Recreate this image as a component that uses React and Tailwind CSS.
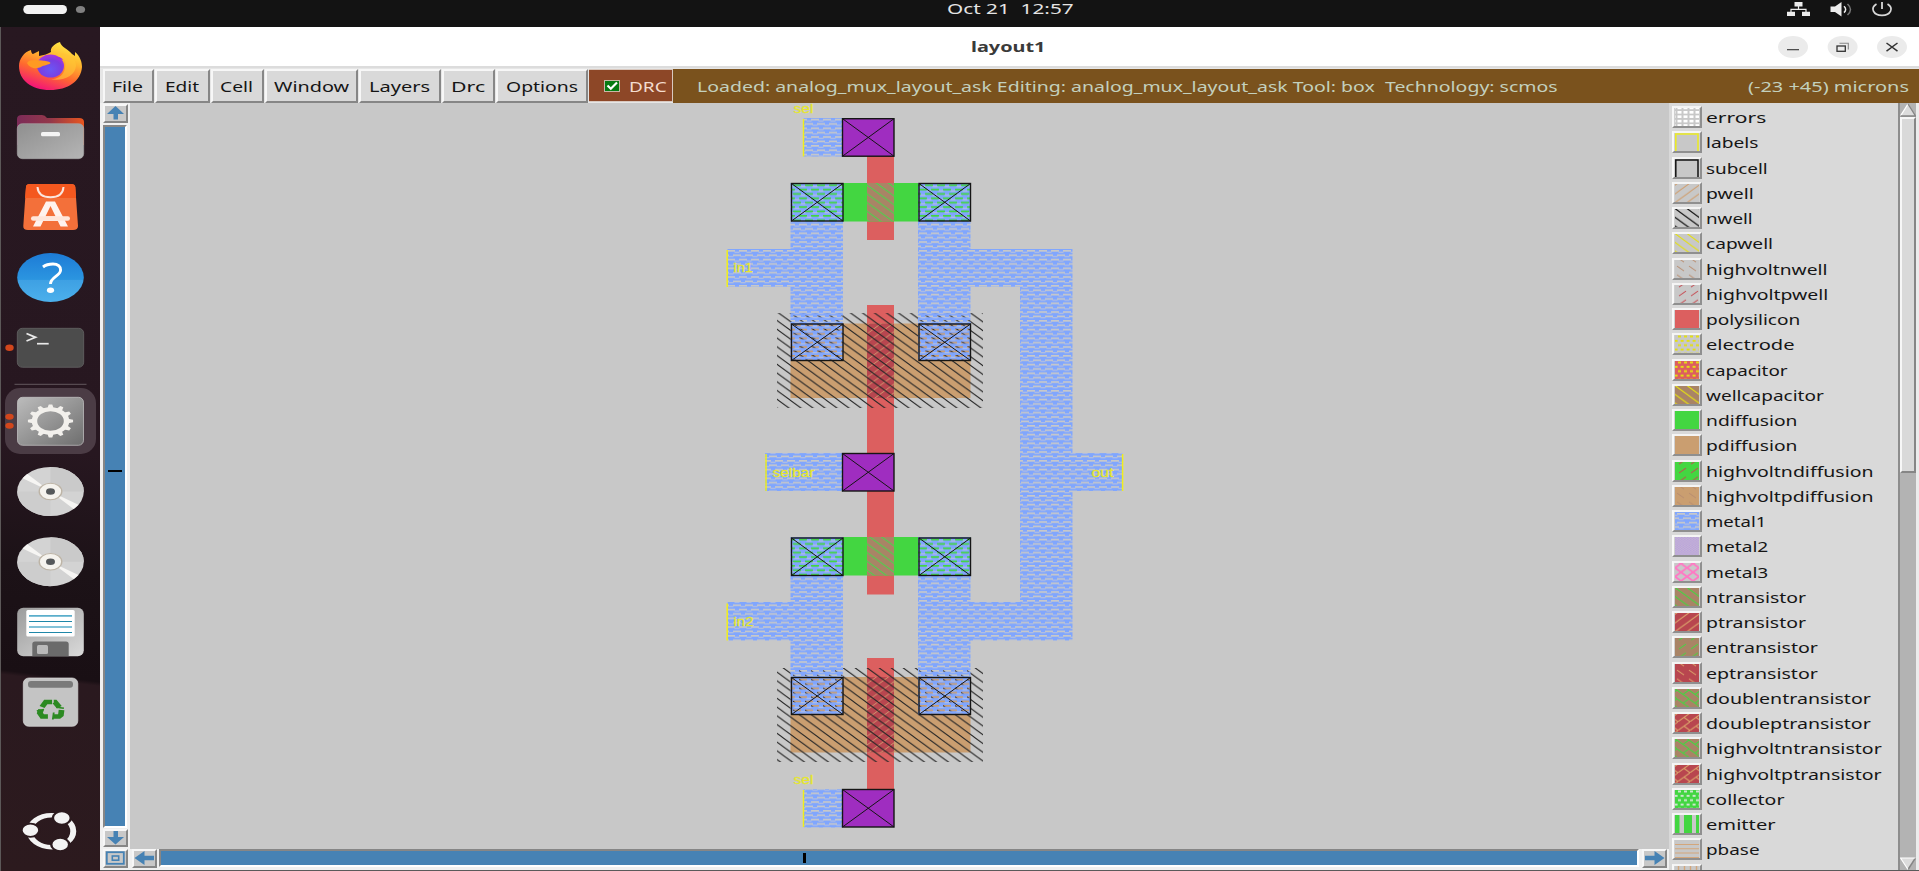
import React, { useLayoutEffect, useRef, useState } from "react";

/* Text stretched horizontally so that it fills a given width. */
function Fit({ w, className = "", children }) {
  const ref = useRef(null);
  const [k, setK] = useState(1);
  useLayoutEffect(() => {
    const n = ref.current.offsetWidth;
    if (n) setK(w / n);
  }, [w]);
  return (
    <span className="block shrink-0 whitespace-pre" style={{ width: w }}>
      <span ref={ref} className={`inline-block origin-left whitespace-pre ${className}`} style={{ transform: `scaleX(${k})` }}>
        {children}
      </span>
    </span>
  );
}

/* ---------- stipple patterns ---------- */
const TW = 12;
const TH = 8.75;

function Hatch({ id, color, kind, w = 1, x = 0, y = 0 }) {
  const paths = {
    back: `M-12 -8.75L24 17.5M-12 0L12 17.5M0 -8.75L24 8.75`,
    fwd: `M-12 17.5L24 -8.75M-12 8.75L12 -8.75M0 17.5L24 0`,
    backDash: `M2 2L9 7`,
    fwdDash: `M2 7L9 2`,
    brickBack: `M-12 -8.75L24 17.5M6 4.4L12 0`,
    brickFwd: `M-12 17.5L24 -8.75M6 4.4L12 8.75`,
  };
  return (
    <pattern id={id} width={TW} height={TH} x={x} y={y} patternUnits="userSpaceOnUse">
      <path d={paths[kind]} stroke={color} strokeWidth={w} fill="none" />
    </pattern>
  );
}

function Metal({ id, x = 0, y = 0 }) {
  return (
    <pattern id={id} width="12" height="8.75" x={x} y={y} patternUnits="userSpaceOnUse">
      <path
        fillRule="evenodd"
        fill="#80a6fe"
        d="M0 0H12V8.75H0ZM1 1H9V2.6H1ZM0 5.4H3V7H0ZM7 5.4H12V7H7Z"
      />
      <path d="M8.5 3.1H12M0 3.1H1.5M2.5 7.5H7.5" stroke="#c0c6da" strokeWidth="1" />
    </pattern>
  );
}

function Defs() {
  return (
    <defs>
      <Metal id="metal" x={6} y={4} />
      <Metal id="metalS" x={1} y={0} />
      <Hatch id="nwell" kind="back" color="#262626" w={1.05} x={778} y={312.5} />
      <Hatch id="nwell2" kind="back" color="#262626" w={1.05} x={782} y={667} />
      <Hatch id="ntr" kind="back" color="#4fd04c" w={1} x={867} y={185} />
      <Hatch id="ptr" kind="fwd" color="#d0a070" w={0.9} x={867} y={325} />
      <Hatch id="sPwell" kind="fwd" color="#cf9f70" y={-1} x={3} />
      <Hatch id="sNwell" kind="back" color="#111" w={1.2} y={1} x={2} />
      <Hatch id="sCap" kind="back" color="#e3e012" w={1.1} y={1} x={2} />
      <Hatch id="sHvn" kind="backDash" color="#b98d70" y={4} />
      <Hatch id="sHvp" kind="fwdDash" color="#c6484f" y={4} x={2} />
      <Hatch id="sGreen" kind="back" color="#43d641" y={1} x={2} />
      <Hatch id="sTan" kind="fwd" color="#dba36a" y={-1} x={3} />
      <Hatch id="sGreenD" kind="fwdDash" color="#43d641" y={4} x={2} />
      <Hatch id="sTanD" kind="backDash" color="#dba36a" y={4} />
      <Hatch id="sGreenB" kind="brickBack" color="#43d641" y={1} x={2} />
      <Hatch id="sTanB" kind="brickFwd" color="#dba36a" y={-1} x={3} />
      <pattern id="sDots" width="6" height="8.75" x="0" y="0" patternUnits="userSpaceOnUse">
        <path fill="#e3e012" d="M3 0.4H6V2.4H3ZM0 4.8H2.6V6.8H0ZM5.6 4.8H6V6.8H5.6Z" />
      </pattern>
      <pattern id="sColl" width="6" height="8.75" x="0" y="0" patternUnits="userSpaceOnUse">
        <path fill="#cfe6cf" d="M3 0.4H6V2.4H3ZM0 4.8H2.6V6.8H0ZM5.6 4.8H6V6.8H5.6Z" />
      </pattern>
      <pattern id="sErr" width="6" height="4.4" x="2.5" y="3" patternUnits="userSpaceOnUse">
        <rect width="4" height="2.6" fill="#fff" />
      </pattern>
      <pattern id="sM2" width="3" height="2.2" patternUnits="userSpaceOnUse">
        <path fill="#b9a2dc" d="M0 0H1.5V1.1H0ZM1.5 1.1H3V2.2H1.5Z" />
      </pattern>
      <pattern id="sM3" width="12" height="8.75" y="0.5" x="6" patternUnits="userSpaceOnUse">
        <path d="M0 0L12 8.75M0 8.75L12 0" stroke="#ff78c4" strokeWidth="1.8" />
      </pattern>
    </defs>
  );
}

/* ---------- layer palette ---------- */
const G = "#c8c8c8";
const LAYERS = [
  ["errors", 60, G, "url(#sErr)"],
  ["labels", 52, G, null, "#ecec20"],
  ["subcell", 62, G, null, "#111111"],
  ["pwell", 47, G, "url(#sPwell)"],
  ["nwell", 47, G, "url(#sNwell)"],
  ["capwell", 67, G, "url(#sCap)"],
  ["highvoltnwell", 122, G, "url(#sHvn)"],
  ["highvoltpwell", 122, G, "url(#sHvp)"],
  ["polysilicon", 94, "#dc5f5f"],
  ["electrode", 89, G, "url(#sDots)"],
  ["capacitor", 82, "#dc5f5f", "url(#sDots)"],
  ["wellcapacitor", 118, "#a98466", "url(#sCap)"],
  ["ndiffusion", 92, "#43d641"],
  ["pdiffusion", 92, "#ca9e70"],
  ["highvoltndiffusion", 167, "#43d641", "url(#sHvp)"],
  ["highvoltpdiffusion", 167, "#ca9e70", "url(#sHvn)"],
  ["metal1", 61, G, "url(#metalS)"],
  ["metal2", 63, "#c4b4d4", "url(#sM2)"],
  ["metal3", 63, G, "url(#sM3)"],
  ["ntransistor", 100, "#a98466", "url(#sGreen)"],
  ["ptransistor", 100, "#b8464f", "url(#sTan)"],
  ["entransistor", 112, "#a98466", "url(#sGreenD)"],
  ["eptransistor", 112, "#b8464f", "url(#sTanD)"],
  ["doublentransistor", 165, "#a98466", "url(#sGreenB)"],
  ["doubleptransistor", 165, "#b8464f", "url(#sTanB)"],
  ["highvoltntransistor", 176, "#a98466", "url(#sGreenB)"],
  ["highvoltptransistor", 176, "#b8464f", "url(#sTanB)"],
  ["collector", 78, "#43d641", "url(#sColl)"],
  ["emitter", 69, G, null, null, "v"],
  ["pbase", 54, G, null, null, "h"],
  ["", 10, G, null, null, "t"],
];

function LayerRow({ layer }) {
  const [name, w, base, pat, frame, extra] = layer;
  return (
    <div className="flex h-[25.26px] shrink-0 items-center">
      <div className="mr-[4px] h-[22px] w-[30px] border-2 border-t-[#f4f4f4] border-l-[#f8f8f8] border-r-[#8f8f8f] border-b-[#8f8f8f] bg-[#d0d0d0] pl-px">
        <svg width="24" height="18" viewBox="0 0 24 18" className="block">
          <rect width="24" height="18" fill={base} />
          {pat && <rect width="24" height="18" fill={pat} />}
          {frame && <path d="M0.8 18V1H23V18" fill="none" stroke={frame} strokeWidth="1.5" />}
          {extra === "v" && <path d="M0 0H4.5V18H0ZM9 0H17V18H9ZM21 0H24V18H21Z" fill="#43d641" />}
          {extra === "h" && <path d="M0 4.5H24M0 8.8H24M0 13H24M0 17.5H24" stroke="#d3a67b" strokeWidth="1.1" />}
          {extra === "t" && <path d="M3.5 0V18M9.5 0V18M15.5 0V18M21.5 0V18" stroke="#d3a67b" strokeWidth="1.4" />}
        </svg>
      </div>
      <Fit w={w} className="text-[14px] leading-[22px] text-[#161616]">{name}</Fit>
    </div>
  );
}

/* ---------- layout drawing ---------- */
function Cross({ x, y, w = 51.5, h = 37.5, fill = "none" }) {
  return (
    <g stroke="#151515">
      <rect x={x} y={y} width={w} height={h} fill={fill} strokeWidth="1.4" />
      <path d={`M${x} ${y}L${x + w} ${y + h}M${x + w} ${y}L${x} ${y + h}`} strokeWidth="1" fill="none" />
    </g>
  );
}

function Label({ x, y, w, children }) {
  return (
    <text x={x} y={y} textLength={w} lengthAdjust="spacingAndGlyphs" fontSize="12" fill="#e6e62e" stroke="#e6e62e" strokeWidth="0.3" className="font-['Liberation_Sans',sans-serif]">
      {children}
    </text>
  );
}

function Canvas() {
  return (
    <svg width="1539" height="746" viewBox="130 103 1539 746" className="block shrink-0">
      <Defs />
      <g fill="#dc5f5f">
        <rect x="867" y="156" width="27" height="84" />
        <rect x="867" y="305" width="27" height="149" />
        <rect x="867" y="490" width="27" height="104.5" />
        <rect x="867" y="658" width="27" height="131" />
      </g>
      <g fill="#43d641">
        <rect x="791" y="183" width="179.5" height="38.5" />
        <rect x="791" y="537" width="179.5" height="38.5" />
      </g>
      <g fill="#a98466">
        <rect x="867" y="183" width="27" height="38.5" />
        <rect x="867" y="537" width="27" height="38.5" />
      </g>
      <g fill="url(#ntr)">
        <rect x="867" y="183" width="27" height="38.5" />
        <rect x="867" y="537" width="27" height="38.5" />
      </g>
      <g fill="#ca9e70">
        <rect x="790.5" y="323.5" width="180" height="74.5" />
        <rect x="790.5" y="677" width="180" height="75.5" />
      </g>
      <g fill="#b8464f">
        <rect x="867" y="323.5" width="27" height="74.5" />
        <rect x="867" y="677" width="27" height="75.5" />
      </g>
      <g fill="url(#ptr)">
        <rect x="867" y="323.5" width="27" height="74.5" />
        <rect x="867" y="677" width="27" height="75.5" />
      </g>
      <rect x="777" y="313" width="206" height="95" fill="url(#nwell)" />
      <rect x="777" y="668" width="206" height="94" fill="url(#nwell2)" />
      <path
        fill="url(#metal)"
        d="M803.5 118H842V156.5H803.5Z M790.5 183H843V361H790.5V287H727.5V249H790.5Z M918 183H970.5V249H1072.5V453H1123V491H1072.5V640.5H970.5V715H918V537H970.5V602H1020V287H970.5V361H918Z M765 453H842V491H765Z M790.5 537H843V715H790.5V640.5H727.5V602H790.5Z M803.5 789H842V827.5H803.5Z"
      />
      <Cross x={842.5} y={118.7} fill="#9f2dc0" />
      <Cross x={842.5} y={453.5} fill="#9f2dc0" />
      <Cross x={842.5} y={789.5} fill="#9f2dc0" />
      <Cross x={791.5} y={183.5} />
      <Cross x={919} y={183.5} />
      <Cross x={791.5} y={324} h={36.5} />
      <Cross x={919} y={324} h={36.5} />
      <Cross x={791.5} y={538} />
      <Cross x={919} y={538} />
      <Cross x={791.5} y={677.5} h={37} />
      <Cross x={919} y={677.5} h={37} />
      <path
        d="M803.5 119V156.5M727.2 250V287M766 454V491M727.2 603.5V640.5M803.5 790V827M1122.6 454V491"
        stroke="#f0ee1c"
        strokeWidth="1.5"
      />
      <Label x={793.5} y={112.5} w={20}>sel</Label>
      <Label x={733.5} y={272} w={19.5}>in1</Label>
      <Label x={772.5} y={476.5} w={42}>selbar</Label>
      <Label x={1091.5} y={476.5} w={22}>out</Label>
      <Label x={733.5} y={626} w={20}>in2</Label>
      <Label x={793.5} y={783.5} w={20}>sel</Label>
    </svg>
  );
}

/* ---------- dock ---------- */
function Slot({ y, h = 70, children }) {
  return (
    <svg width="99" height={h} viewBox={`1 ${y} 99 ${h}`} className="block shrink-0">
      {children}
    </svg>
  );
}

function Disc({ cy }) {
  return (
    <g transform={`translate(50.5 ${cy}) scale(1.36 1)`}>
      <circle r="24.5" fill="#d3d3d3" />
      <path d="M0 0L0 -24.5A24.5 24.5 0 0 1 24.5 0Z" fill="#cacaca" />
      <path d="M0 0L0 24.5A24.5 24.5 0 0 1 -24.5 0Z" fill="#cdcdcd" />
      <path d="M0 0L-20.5 -13.2A24.5 24.5 0 0 1 -17 -17.4ZM0 0L20.5 13.2A24.5 24.5 0 0 1 17 17.4Z" fill="#f6f5f3" />
      <circle r="8.3" fill="#f5f3ee" stroke="#bdb4a6" strokeWidth="1" />
      <circle r="3.3" fill="#55585a" />
    </g>
  );
}

const TEETH = [0, 30, 60, 90, 120, 150, 180, 210, 240, 270, 300, 330];

function Dock() {
  return (
    <div className="flex h-full w-[100px] shrink-0 flex-col border-l border-[#5c5858] bg-[linear-gradient(187deg,#281821_0%,#271720_50%,#1c1217_64%,#190f14_76.5%,#2a191f_77%,#2c1a1e_100%)] pt-1">
      <Slot y={31}>
        <defs>
          <linearGradient id="ff" x1="0.8" y1="0" x2="0.35" y2="1">
            <stop offset="0" stopColor="#fff04a" />
            <stop offset="0.35" stopColor="#ffb52e" />
            <stop offset="0.65" stopColor="#ff6a2e" />
            <stop offset="1" stopColor="#f3127a" />
          </linearGradient>
          <radialGradient id="ffb" cx="0.5" cy="0.65" r="0.7">
            <stop offset="0" stopColor="#6a57f5" />
            <stop offset="0.6" stopColor="#7a3de0" />
            <stop offset="1" stopColor="#b833e1" />
          </radialGradient>
        </defs>
        <path d="M19 66C19 59 24 52 31 50C31 52 32 54 33 54L39 51V56C44 55 48 54 51 52C50 48 54 44 60 42C61 47 68 49 72 54L75 56V52C80 56 82 62 82 67C81 81 68 90 50 90C31 90 19 80 19 66Z" fill="url(#ff)" />
        <ellipse cx="50.5" cy="66" rx="13.5" ry="11.5" fill="url(#ffb)" />
        <path d="M27 63C29 59 37 60 42 60.5C45 61 49 61 50.5 63C49 65 44 65 41 67C37 69 30 69 27 63Z" fill="#ff9a22" />
        <path d="M60 57C66 59 66 62 65 68C64 76 56 80 49 79C63 82 75 76 76 66C76 59 71 55 62 53C58 53 56 55 60 57Z" fill="#ffc436" opacity="0.65" />
        <path d="M55 57C59 56 62 58 63 60L58 58.5L62 63" fill="#9b32dd" />
      </Slot>
      <Slot y={101}>
        <defs>
          <linearGradient id="fold" x1="0" x2="1"><stop offset="0" stopColor="#7c2b58" /><stop offset="0.5" stopColor="#93374a" /><stop offset="1" stopColor="#e9561f" /></linearGradient>
          <linearGradient id="gry" x1="0" y1="0" x2="1" y2="1"><stop offset="0" stopColor="#8f8f8f" /><stop offset="1" stopColor="#b5b5b5" /></linearGradient>
        </defs>
        <path d="M17 145V119Q17 115 22 115H42Q45 115 47 118H79Q84 118 84 122V145Z" fill="url(#fold)" />
        <rect x="17.3" y="123.7" width="66.4" height="35" rx="5" fill="url(#gry)" stroke="#aaa" strokeWidth="0.6" />
        <rect x="41" y="132" width="19" height="4.3" rx="1.6" fill="#f4f4f4" />
      </Slot>
      <Slot y={171}>
        <path d="M30 184H71Q75 184 75.3 187L78 226Q78 230 73 230H28Q23 230 23.3 226L26 187Q26 184 30 184Z" fill="#f3703a" />
        <path d="M30 184H71Q75 184 75.3 187L76 198H25L26 187Q26 184 30 184Z" fill="#f4581f" />
        <path d="M37.5 187C38 194 43 197.3 50.5 197.3C58 197.3 63 194 63.5 187" fill="none" stroke="#fbe5dc" strokeWidth="2" />
        <path d="M46 201.5H55L68 226.5H60.5L57.8 221H43.2L40.5 226.5H33L46 201.5ZM50.5 206L45.5 216.3H55.5Z" fill="#fff3ee" fillRule="evenodd" />
        <rect x="31" y="216.3" width="39" height="4.4" rx="2.2" fill="#ffe6da" />
      </Slot>
      <Slot y={241}>
        <defs><linearGradient id="hb" x1="0" y1="0" x2="0" y2="1"><stop offset="0" stopColor="#1d7bd6" /><stop offset="0.54" stopColor="#2b95e0" /><stop offset="0.55" stopColor="#3ea0e3" /><stop offset="1" stopColor="#4cb0ec" /></linearGradient></defs>
        <ellipse cx="50.5" cy="277.5" rx="33.3" ry="24.4" fill="url(#hb)" />
        <path d="M43 267C46 264.6 50 264 53 264C58 264 60.6 266.6 60.6 270C60.6 276 50.5 277 50.5 284" fill="none" stroke="#fff" strokeWidth="2.9" />
        <ellipse cx="50.5" cy="290.3" rx="3.6" ry="2.7" fill="#fff" />
      </Slot>
      <Slot y={311} h={74}>
        <ellipse cx="9.5" cy="347.7" rx="4.2" ry="3.2" fill="#d2461c" />
        <rect x="17.3" y="328.3" width="66.4" height="39" rx="5" fill="#4c4c4c" stroke="#6a6a6a" strokeWidth="0.7" />
        <path d="M26.5 333.5L35.5 337.3L26.5 341" fill="none" stroke="#e9e9e9" strokeWidth="1.8" />
        <path d="M37 343.7H48.7" stroke="#e9e9e9" strokeWidth="1.7" />
        <path d="M14.5 384.3H86.5" stroke="#564a50" strokeWidth="1.2" />
      </Slot>
      <Slot y={385} h={71}>
        <defs><linearGradient id="st" x1="0" y1="0" x2="1" y2="1"><stop offset="0" stopColor="#bcbcbc" /><stop offset="1" stopColor="#6e6e6e" /></linearGradient></defs>
        <rect x="5" y="388" width="91" height="66" rx="15" fill="#4b3c45" />
        <rect x="17.5" y="397.3" width="66" height="48" rx="5" fill="url(#st)" stroke="#c9c9c9" strokeWidth="0.7" />
        <ellipse cx="9.5" cy="416.7" rx="4.2" ry="3" fill="#d2461c" />
        <ellipse cx="9.5" cy="425.7" rx="4.2" ry="3" fill="#d2461c" />
        <g transform="translate(50.5 421) scale(1.36 1)">
          <circle r="11.8" fill="none" stroke="#f2f0ec" strokeWidth="4" />
          {TEETH.map((a) => (
            <path key={a} d="M-2.2 -13L-1.3 -16.6H1.3L2.2 -13Z" fill="#f2f0ec" transform={`rotate(${a})`} />
          ))}
        </g>
      </Slot>
      <Slot y={456}><Disc cy={491.5} /></Slot>
      <Slot y={526}><Disc cy={561.7} /></Slot>
      <Slot y={596}>
        <defs><linearGradient id="fl" x1="0" y1="0" x2="1" y2="1"><stop offset="0" stopColor="#9c9c9c" /><stop offset="1" stopColor="#dadada" /></linearGradient></defs>
        <rect x="17.2" y="607.7" width="66.6" height="48.6" rx="6" fill="url(#fl)" />
        <rect x="26.3" y="610" width="48.4" height="26.5" rx="1.5" fill="#fff" />
        <path d="M29 615.8H72M29 627H72" stroke="#5baecb" strokeWidth="1.7" />
        <path d="M29 621.5H72M29 632.5H72" stroke="#1f87a8" strokeWidth="1.2" />
        <path d="M32.3 656.3V644Q32.3 641.5 35 641.5H66Q68.7 641.5 68.7 644V656.3Z" fill="#6b6b6b" />
        <rect x="37" y="645" width="11" height="9" rx="1.5" fill="#b9b9b9" />
      </Slot>
      <Slot y={666}>
        <rect x="23.3" y="678" width="54.5" height="48.3" rx="5.5" fill="#c4c4c4" stroke="#dadada" strokeWidth="0.7" />
        <rect x="28" y="681" width="45" height="6.7" rx="3" fill="#7a7a7a" />
        <g transform="translate(50.5 709.5) scale(1.3 1)" fill="none" stroke="#2c8a22" strokeWidth="4.4">
          <path d="M-6.5 -2.5L-3.6 -7.5H1.2" />
          <path d="M2.5 -7.5H3.4L6.8 -2.2" />
          <path d="M8.5 0.5L8 5.5L6.5 7H2" />
          <path d="M-2 7H-6.3L-8.2 3.5L-7.2 0" />
          <path d="M-10.5 1.5L-5 -0.2M10.3 -1.2L4.5 -2.2M2.5 3L1.8 10" strokeWidth="1.4" />
        </g>
      </Slot>
      <div className="h-[64px] shrink-0" />
      <Slot y={800} h={65}>
        <g transform="translate(51.5 831.2) scale(1.36 1)">
          <circle r="16" fill="none" stroke="#f3f3f3" strokeWidth="4.4" />
          <g fill="#f3f3f3" stroke="#2b1a1e" strokeWidth="1.8">
            <circle cx="-15.5" cy="-1" r="6.6" />
            <circle cx="7.6" cy="-13.2" r="6.6" />
            <circle cx="6.4" cy="13.3" r="6.6" />
          </g>
        </g>
      </Slot>
    </div>
  );
}

/* ---------- window furniture ---------- */
const MENUS = [
  ["File", 51, 30.5, "pl-[7px]"],
  ["Edit", 54.5, 34, "pl-[7.5px]"],
  ["Cell", 53, 33, "pl-[7.5px]"],
  ["Window", 93.5, 75, "pl-[7px]"],
  ["Layers", 81.5, 61.5, "pl-[8px]"],
  ["Drc", 53, 33.5, "pl-[7.5px]"],
  ["Options", 92, 72, "pl-[8px]"],
];

const BEVEL = "border-2 border-t-[#f7f7f7] border-l-[#f7f7f7] border-r-[#868686] border-b-[#868686]";

function ArrowButton({ d, children }) {
  return (
    <div className={`h-[18.5px] w-[25px] shrink-0 bg-[#c8c8c8] ${BEVEL}`}>
      <svg width="21" height="14" viewBox="0 0 21 14" className="block">
        {d && <path d={d} fill="#4682b4" />}
        {children}
      </svg>
    </div>
  );
}

export default function App() {
  return (
    <div className="flex h-[871px] w-[1919px] flex-col overflow-hidden bg-[#d9d9d9] font-['Noto_Sans',sans-serif]">
      <div className="flex h-[27px] shrink-0 items-start bg-[#131313]">
        <svg width="100" height="27" className="block shrink-0">
          <rect x="23.3" y="5" width="43.7" height="9" rx="4.5" fill="#f2f2f2" />
          <ellipse cx="80.5" cy="9.6" rx="4.6" ry="3.5" fill="#808080" />
        </svg>
        <div className="-mt-[4px] ml-[847px] flex-1">
          <Fit w={126} className="text-[14px] leading-[21px] text-[#e4e4e4]">Oct 21  12:57</Fit>
        </div>
        <svg width="139" height="27" viewBox="1780 0 139 27" className="block shrink-0" fill="#ececec">
          <path d="M1794.5 2H1802.5V6.5H1794.5ZM1787 11.8H1795V16H1787ZM1802 11.8H1810V16H1802Z" />
          <path d="M1798.5 6V9.3M1791 12.5V9.3H1806V12.5" fill="none" stroke="#ececec" strokeWidth="1.2" />
          <path d="M1830.5 6.5H1835L1841.5 2V16.5L1835 12H1830.5Z" />
          <path d="M1844 6.3Q1847.3 9.4 1844 12.6" fill="none" stroke="#ececec" strokeWidth="1.5" />
          <path d="M1847.5 4Q1853.5 9.4 1847.5 15" fill="none" stroke="#777" strokeWidth="1.5" />
          <path d="M1876.5 4C1870 8 1873 15.4 1882 15.4C1891 15.4 1894 8 1887.5 4" fill="none" stroke="#d8d8d8" strokeWidth="1.7" />
          <path d="M1882 2V9" stroke="#d8d8d8" strokeWidth="1.8" />
        </svg>
      </div>

      <div className="flex min-h-0 flex-1">
        <Dock />
        <div className="flex min-w-0 flex-1 flex-col border-b border-[#5a5a5a]">
          <div className="flex h-[41px] shrink-0 border-b-2 border-[#dcdcdc] bg-white">
            <div className="mt-[7px] ml-[871px] flex-1">
              <Fit w={75} className="text-[13.5px] leading-[21px] font-bold text-[#3a3a3a]">layout1</Fit>
            </div>
            <svg width="149" height="39" viewBox="1770 27 149 39" className="block shrink-0">
              <g fill="#ebebeb">
                <ellipse cx="1793" cy="47" rx="15" ry="11" />
                <ellipse cx="1842.6" cy="47" rx="15" ry="11" />
                <ellipse cx="1892" cy="47" rx="15" ry="11" />
              </g>
              <g fill="none" stroke="#333">
                <path d="M1787 49.7H1799" strokeWidth="1.1" />
                <rect x="1837" y="46" width="8.3" height="5.3" strokeWidth="1.3" />
                <path d="M1839.5 43.2H1848.3V49.5" stroke="#888" strokeWidth="1.1" />
                <path d="M1886.5 43L1897.5 51.2M1897.5 43L1886.5 51.2" strokeWidth="1.5" />
              </g>
            </svg>
          </div>

          <div className="flex h-[35px] shrink-0 items-start bg-[#e6e6e6] pt-px pl-[3px]">
            {MENUS.map(([label, w, tw, pad]) => (
              <div key={label} className={`mr-px h-[34px] shrink-0 bg-[#d9d9d9] pt-[3px] ${BEVEL} ${pad}`} style={{ width: w }}>
                <Fit w={tw} className="text-[14px] leading-[20px] text-[#151515]">{label}</Fit>
              </div>
            ))}
            <div className="flex h-[33px] w-[84px] shrink-0 items-center border-y border-r border-[#d9c9c0] bg-[#8d4727] pl-[15px]">
              <svg width="16" height="12" viewBox="0 0 16 12" className="mr-[9px] block shrink-0">
                <rect x="0.5" y="0.5" width="15" height="11" fill="#067a12" stroke="#c9b8a8" />
                <path d="M3.5 5.5L6.8 8.7L13 2.5" fill="none" stroke="#fff" strokeWidth="2.2" />
              </svg>
              <Fit w={38} className="text-[14px] leading-[20px] text-[#f3dccf]">DRC</Fit>
            </div>
            <div className="flex h-[34px] flex-1 items-center justify-between bg-[#7a521d] pr-[10px] pl-[24px]">
              <Fit w={860} className="text-[14px] leading-[20px] text-[#c3d0bd]">
                {"Loaded: analog_mux_layout_ask Editing: analog_mux_layout_ask Tool: box  Technology: scmos"}
              </Fit>
              <Fit w={161} className="text-[14px] leading-[20px] text-[#c3d0bd]">(-23 +45) microns</Fit>
            </div>
          </div>

          <div className="flex min-h-0 flex-1">
            <div className="flex w-[30px] shrink-0 flex-col bg-[#f0f0f0] pt-px pl-[3px]">
              <ArrowButton d="M10.5 0L19 8H13V13.5H8.5V8H2Z" />
              <div className="mt-[2px] flex h-[703px] w-[24px] shrink-0 items-center border-2 border-t-[#868686] border-l-[#868686] border-r-white border-b-white bg-[#4682b4]">
                <div className="-mt-[10px] ml-[3px] h-[2px] w-[14px] bg-black" />
              </div>
              <div className="mt-px"><ArrowButton d="M8.5 0H13V6H19L10.5 13.5L2 6H8.5Z" /></div>
              <div className="mt-[2px]">
                <ArrowButton>
                  <rect x="1.8" y="1.2" width="17" height="11.6" fill="none" stroke="#4682b4" strokeWidth="1.8" />
                  <rect x="7.3" y="5" width="6.4" height="4.2" fill="none" stroke="#4682b4" strokeWidth="1.6" />
                </ArrowButton>
              </div>
            </div>

            <div className="flex w-[1539px] shrink-0 flex-col bg-[#c8c8c8]">
              <Canvas />
              <div className="flex min-h-0 flex-1 items-start bg-[#f0f0f0] pl-[2px]">
                <ArrowButton d="M0.5 7L10.5 0V4.8H20V9.2H10.5V14Z" />
                <div className="ml-[2px] h-[18px] w-[1480px] shrink-0 border-2 border-t-[#868686] border-l-[#868686] border-r-white border-b-white bg-[#4682b4]">
                  <div className="mt-[2px] ml-[642px] h-[10px] w-[2.5px] bg-black" />
                </div>
                <div className="ml-[3px]"><ArrowButton d="M20.5 7L10.5 0V4.8H1V9.2H10.5V14Z" /></div>
              </div>
            </div>

            <div className="flex min-h-0 flex-1 bg-[#d9d9d9]">
              <div className="flex min-h-0 w-[229px] shrink-0 flex-col overflow-hidden pt-[1.5px] pl-[3px]">
                {LAYERS.map((l, i) => <LayerRow key={i} layer={l} />)}
              </div>
              <div className="flex w-[18px] shrink-0 flex-col border-l-2 border-[#8d8d8d] bg-[#b3b3b3]">
                <svg width="16" height="14" viewBox="0 0 16 14" className="block shrink-0">
                  <path d="M8 1L15.5 13H0.5Z" fill="#dcdcdc" />
                  <path d="M8 1L0.5 13" stroke="#fff" strokeWidth="1.3" />
                  <path d="M8 1L15.5 13H0.5" fill="none" stroke="#858585" strokeWidth="1.3" />
                </svg>
                <div className={`h-[356px] w-[16px] shrink-0 bg-[#d9d9d9] ${BEVEL}`} />
                <div className="flex-1" />
                <svg width="16" height="13" viewBox="0 0 16 13" className="block shrink-0">
                  <path d="M0.5 1H15.5L8 12.5Z" fill="#dcdcdc" />
                  <path d="M15.5 1L8 12.5" stroke="#858585" strokeWidth="1.5" />
                  <path d="M8 12.5L0.5 1H15.5" fill="none" stroke="#fff" strokeWidth="1.2" />
                </svg>
              </div>
              <div className="flex-1 bg-[#ececec]" />
            </div>
          </div>
        </div>
      </div>
    </div>
  );
}
